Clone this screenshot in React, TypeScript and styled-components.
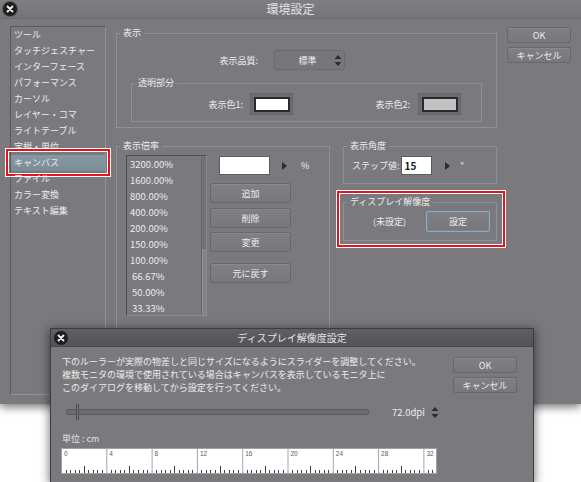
import React from 'react'
import styled, { createGlobalStyle } from 'styled-components'

const GlobalStyle = createGlobalStyle`
  html, body { margin: 0; padding: 0; background: #ffffff; }
`

const fontStack = `"Noto Sans CJK JP", "Noto Sans", "Liberation Sans", sans-serif`
const textColor = '#ececec'
const panelBg = '#7a7a7e'
const groupLine = '#909094'

const Page = styled.div`
  position: relative;
  width: 581px;
  height: 482px;
  overflow: hidden;
  font-family: ${fontStack};
  font-size: 9px;
  color: ${textColor};
`

const MainWindow = styled.div`
  width: 581px;
  height: 404px;
  background: ${panelBg};
  box-shadow: 0 3px 9px rgba(0, 0, 0, 0.55);
  display: flex;
  flex-direction: column;
`

const TitleBar = styled.div<{ $dark?: boolean }>`
  height: ${({ $dark }) => ($dark ? '18px' : '19px')};
  flex: none;
  box-sizing: border-box;
  display: grid;
  grid-template-columns: 20px 1fr 20px;
  align-items: center;
  background: ${({ $dark }) =>
    $dark ? 'linear-gradient(#606064, #535357)' : 'linear-gradient(#7f7f83, #757579)'};
  border-bottom: 1px solid ${({ $dark }) => ($dark ? '#48484c' : '#6a6a6e')};
`

const TitleText = styled.div<{ $size: number }>`
  text-align: center;
  font-size: ${({ $size }) => $size}px;
  color: #e2e2e2;
  line-height: 1;
`

const CloseCircle = styled.span`
  width: 14px;
  height: 14px;
  margin-left: 3px;
  border-radius: 50%;
  background: #1e1e1e;
  box-shadow: 0 0 0 1px #58585c;
  display: flex;
  align-items: center;
  justify-content: center;
`

const CloseButton = () => (
  <CloseCircle>
    <svg width="8" height="8" viewBox="0 0 8 8">
      <path d="M1.5 1.5 L6.5 6.5 M6.5 1.5 L1.5 6.5" stroke="#f2f2f2" strokeWidth="1.8" strokeLinecap="round" />
    </svg>
  </CloseCircle>
)

const Body = styled.div`
  flex: 1;
  display: flex;
  padding: 7px 0 0 10px;
`

const Sidebar = styled.div`
  width: 96px;
  height: 369px;
  flex: none;
  box-sizing: border-box;
  border: 1px solid;
  border-color: #5a5a5e #929296 #929296 #5a5a5e;
`

const SideItem = styled.div<{ $selected?: boolean }>`
  position: relative;
  height: 16px;
  line-height: 16px;
  padding-left: 3px;
  white-space: nowrap;
  background: ${({ $selected }) => ($selected ? 'linear-gradient(#869aa4, #7b8c96)' : 'transparent')};

  ${({ $selected }) =>
    $selected &&
    `&::after {
      content: '';
      position: absolute;
      top: -6px;
      bottom: -5px;
      left: -5px;
      right: -5px;
      border: 2px solid #e3141c;
      box-shadow: inset 0 0 0 1px #ffffff, 0 0 0 1px #ffffff;
    }`}
`

const Content = styled.div`
  display: flex;
  gap: 10px;
  margin-left: 10px;
`

const LeftCol = styled.div`
  width: 381px;
  margin-top: 1px;
  display: flex;
  flex-direction: column;
`

const RightCol = styled.div`
  width: 64px;
  margin-top: 1px;
  display: flex;
  flex-direction: column;
  gap: 4px;
`

const Group = styled.fieldset<{ $h: number; $w?: number }>`
  margin: 0;
  padding: 0;
  min-width: 0;
  box-sizing: border-box;
  height: ${({ $h }) => $h}px;
  ${({ $w }) => ($w ? `width: ${$w}px;` : '')}
  border: 1px solid ${groupLine};
`

const Legend = styled.legend`
  padding: 0 3px;
  margin-left: 3px;
  line-height: 12px;
  font-size: 9px;
`

const QualityRow = styled.div`
  display: flex;
  align-items: center;
  margin-top: 11px;
`

const RowLabel = styled.span<{ $w?: number }>`
  ${({ $w }) => ($w ? `width: ${$w}px; text-align: right;` : '')}
  white-space: nowrap;
`

const SelectBox = styled.div`
  margin-left: 16px;
  width: 71px;
  height: 20px;
  box-sizing: border-box;
  background: #77777b;
  border: 1px solid #6a6a6e;
  border-radius: 2px;
  display: flex;
  align-items: center;
`

const SelectText = styled.span`
  flex: 1;
  text-align: center;
  padding-left: 6px;
`

const SpinIcon = () => (
  <svg width="8" height="13" viewBox="0 0 8 13">
    <path d="M4 1 L7.5 5 L0.5 5 Z M0.5 8 L7.5 8 L4 12 Z" fill="#2c2c2e" />
  </svg>
)

const SpinWrap = styled.span<{ $ml?: number }>`
  display: flex;
  margin-right: 2px;
  margin-left: ${({ $ml }) => $ml ?? 0}px;
`

const SubGroup = styled(Group)`
  margin: 7px 14px 0 14px;
`

const SwatchRow = styled.div`
  display: flex;
  margin-top: 4px;
`

const SwatchCell = styled.div<{ $w: number; $gap: number }>`
  width: ${({ $w }) => $w}px;
  display: flex;
  justify-content: flex-end;
  align-items: center;
  gap: ${({ $gap }) => $gap}px;
`

const SwatchFrame = styled.div`
  width: 43px;
  height: 22px;
  box-sizing: border-box;
  background: #6d6d71;
  border: 1px solid #666669;
  display: flex;
  align-items: center;
  justify-content: center;
`

const Swatch = styled.div<{ $color: string }>`
  width: 36px;
  height: 15px;
  box-sizing: border-box;
  border: 2px solid #2a2a2c;
  background: ${({ $color }) => $color};
`

const LowerRow = styled.div`
  display: flex;
  gap: 13px;
  margin-top: 12px;
`

const ZoomInner = styled.div`
  display: flex;
  padding: 3px 0 0 9px;
`

const ListBox = styled.div`
  width: 81px;
  height: 161px;
  box-sizing: border-box;
  border: 1px solid;
  border-color: #4e4e52 #8c8c90 #8c8c90 #4e4e52;
  display: flex;
  overflow: hidden;
`

const ListItems = styled.div`
  flex: 1;
`

const ListItem = styled.div<{ $indent?: boolean }>`
  height: 16px;
  line-height: 16px;
  padding-left: ${({ $indent }) => ($indent ? 5 : 3)}px;
  font-size: 9.5px;
  white-space: nowrap;
`

const ScrollTrack = styled.div`
  width: 5px;
  box-sizing: border-box;
  background: #727276;
  border-left: 1px solid #67676b;
  display: flex;
  flex-direction: column;
`

const ScrollThumb = styled.div`
  margin-top: 93px;
  flex: 1;
  background: #838387;
  border-left: 1px solid #909094;
`

const ZoomControls = styled.div`
  margin-left: 3px;
  display: flex;
  flex-direction: column;
`

const InputRow = styled.div<{ $ml?: number }>`
  display: flex;
  align-items: center;
  height: 19px;
  margin-top: 1px;
  margin-left: ${({ $ml }) => $ml ?? 0}px;
`

const TextInput = styled.div<{ $w: number; $ml?: number }>`
  width: ${({ $w }) => $w}px;
  height: 19px;
  margin-left: ${({ $ml }) => $ml ?? 0}px;
  box-sizing: border-box;
  background: #ffffff;
  border: 1px solid #5c5c60;
  color: #1a1a1a;
  font-size: 10px;
  font-weight: 700;
  line-height: 17px;
  padding-left: 3px;
`

const ArrowWrap = styled.span<{ $ml: number }>`
  display: flex;
  margin-left: ${({ $ml }) => $ml}px;
`

const Unit = styled.span<{ $ml: number }>`
  margin-left: ${({ $ml }) => $ml}px;
`

const RightArrow = () => (
  <svg width="5" height="8" viewBox="0 0 5 8">
    <path d="M0 0 L5 4 L0 8 Z" fill="#2c2c2e" />
  </svg>
)

const Button = styled.div<{ $w?: number; $h?: number; $mt?: number; $focus?: boolean }>`
  width: ${({ $w }) => $w ?? 64}px;
  height: ${({ $h }) => $h ?? 16}px;
  margin-top: ${({ $mt }) => $mt ?? 0}px;
  flex: none;
  box-sizing: border-box;
  display: flex;
  align-items: center;
  justify-content: center;
  background: linear-gradient(#808084, #78787c);
  border: 1px solid ${({ $focus }) => ($focus ? '#8fadbe' : '#68686c')};
  box-shadow: ${({ $focus }) =>
    $focus ? 'inset 0 0 0 1px #74858f' : 'inset 0 1px 0 rgba(255, 255, 255, 0.08)'};
  border-radius: 2px;
  white-space: nowrap;
`

const RightStack = styled.div`
  width: 154px;
  display: flex;
  flex-direction: column;
`

const AngleRow = styled.div`
  display: flex;
  align-items: center;
  margin-top: 4px;
  padding-left: 8px;
`

const Highlighted = styled.div`
  position: relative;
  margin-top: 12px;

  &::after {
    content: '';
    position: absolute;
    top: -5px;
    bottom: -6px;
    left: -6px;
    right: -8px;
    border: 2px solid #e3141c;
    box-shadow: inset 0 0 0 1px #ffffff, 0 0 0 1px #ffffff;
    pointer-events: none;
  }
`

const ResolutionRow = styled.div`
  display: flex;
  align-items: center;
  margin-top: 3px;
  padding-left: 29px;
  gap: 20px;
`

/* overlay dialog */

const Dialog = styled.div`
  position: absolute;
  left: 50px;
  top: 328px;
  width: 484px;
  height: 156px;
  box-sizing: border-box;
  background: ${panelBg};
  border: 1px solid #3c3c40;
  box-shadow: 0 2px 10px rgba(0, 0, 0, 0.6);
  display: flex;
  flex-direction: column;
`

const DialogBody = styled.div`
  display: grid;
  grid-template-columns: 1fr 64px;
  padding: 8px 16px 0 11px;
`

const Message = styled.div`
  line-height: 13px;
  white-space: nowrap;
`

const DialogButtons = styled.div`
  display: flex;
  flex-direction: column;
  gap: 4px;
  margin-top: 2px;
`

const SliderRow = styled.div`
  grid-column: 1 / span 2;
  display: flex;
  align-items: center;
  height: 16px;
  margin-top: 10px;
  padding-left: 4px;
`

const SliderTrack = styled.div`
  position: relative;
  width: 303px;
  height: 6px;
  box-sizing: border-box;
  background: #6c6c70;
  border: 1px solid #5a5a5e;
  border-radius: 2px;
`

const SliderThumb = styled.div`
  position: absolute;
  left: 9px;
  top: -6px;
  width: 3px;
  height: 16px;
  box-sizing: border-box;
  background: #77777b;
  border: 1px solid #505054;
  border-radius: 1px;
`

const DpiValue = styled.span`
  margin-left: 23px;
  font-size: 9.5px;
`

const UnitLabel = styled.div`
  grid-column: 1 / span 2;
  margin-top: 13px;
  line-height: 11px;
  color: #e0e0e0;
`

const RulerBox = styled.div`
  grid-column: 1 / span 2;
  margin: 4px 0 0 -1px;
  width: 376px;
  height: 26px;
  display: flex;
`

const Ruler = () => {
  const seg = 45.3
  const w = 376
  const h = 26
  const ticks: React.ReactNode[] = []
  const labels: React.ReactNode[] = []
  for (let s = 0; s * seg < w; s++) {
    const x0 = s * seg
    ticks.push(<line key={`s${s}`} x1={x0 + 0.5} y1={0} x2={x0 + 0.5} y2={h} stroke="#a4a4a8" strokeWidth={1} />)
    labels.push(
      <text key={`l${s}`} x={x0 + 3} y={8} fontSize={6.5} fill="#5a5a5a" fontFamily="Liberation Sans, sans-serif">
        {s * 4}
      </text>
    )
    for (let t = 1; t < 10; t++) {
      const x = Math.round(x0 + (t * seg) / 10) + 0.5
      if (x >= w - 1) break
      const len = t === 5 ? 8 : 4
      ticks.push(<line key={`t${s}-${t}`} x1={x} y1={h - len} x2={x} y2={h} stroke="#3a3a3a" strokeWidth={1} />)
    }
  }
  return (
    <RulerBox>
      <svg width={w} height={h} viewBox={`0 0 ${w} ${h}`}>
        <rect x={0} y={0} width={w} height={h} fill="#ffffff" />
        {ticks}
        {labels}
        <rect x={0.5} y={0.5} width={w - 1} height={h - 1} fill="none" stroke="#a0a0a4" />
      </svg>
    </RulerBox>
  )
}

const sideItems = [
  'ツール',
  'タッチジェスチャー',
  'インターフェース',
  'パフォーマンス',
  'カーソル',
  'レイヤー・コマ',
  'ライトテーブル',
  '定規・単位',
  'キャンバス',
  'ファイル',
  'カラー変換',
  'テキスト編集',
]

const zoomLevels = [
  '3200.00%',
  '1600.00%',
  '800.00%',
  '400.00%',
  '200.00%',
  '150.00%',
  '100.00%',
  '66.67%',
  '50.00%',
  '33.33%',
]

export default function App() {
  return (
    <Page>
      <GlobalStyle />
      <MainWindow>
        <TitleBar>
          <CloseButton />
          <TitleText $size={12}>環境設定</TitleText>
        </TitleBar>
        <Body>
          <Sidebar>
            {sideItems.map((item) => (
              <SideItem key={item} $selected={item === 'キャンバス'}>
                {item}
              </SideItem>
            ))}
          </Sidebar>
          <Content>
            <LeftCol>
              <Group $h={101}>
                <Legend>表示</Legend>
                <QualityRow>
                  <RowLabel $w={141}>表示品質:</RowLabel>
                  <SelectBox>
                    <SelectText>標準</SelectText>
                    <SpinWrap>
                      <SpinIcon />
                    </SpinWrap>
                  </SelectBox>
                </QualityRow>
                <SubGroup $h={45}>
                  <Legend>透明部分</Legend>
                  <SwatchRow>
                    <SwatchCell $w={161} $gap={7}>
                      <RowLabel>表示色1:</RowLabel>
                      <SwatchFrame>
                        <Swatch $color="#ffffff" />
                      </SwatchFrame>
                    </SwatchCell>
                    <SwatchCell $w={168} $gap={8}>
                      <RowLabel>表示色2:</RowLabel>
                      <SwatchFrame>
                        <Swatch $color="#c2c2c2" />
                      </SwatchFrame>
                    </SwatchCell>
                  </SwatchRow>
                </SubGroup>
              </Group>

              <LowerRow>
                <Group $h={256} $w={214}>
                  <Legend>表示倍率</Legend>
                  <ZoomInner>
                    <ListBox>
                      <ListItems>
                        {zoomLevels.map((z) => (
                          <ListItem key={z} $indent={z.length < 7}>
                            {z}
                          </ListItem>
                        ))}
                      </ListItems>
                      <ScrollTrack>
                        <ScrollThumb />
                      </ScrollTrack>
                    </ListBox>
                    <ZoomControls>
                      <InputRow $ml={9}>
                        <TextInput $w={51} />
                        <ArrowWrap $ml={12}>
                          <RightArrow />
                        </ArrowWrap>
                        <Unit $ml={14}>%</Unit>
                      </InputRow>
                      <Button $w={81} $h={20} $mt={8}>追加</Button>
                      <Button $w={81} $h={20} $mt={5}>削除</Button>
                      <Button $w={81} $h={20} $mt={4}>変更</Button>
                      <Button $w={81} $h={20} $mt={11}>元に戻す</Button>
                    </ZoomControls>
                  </ZoomInner>
                </Group>

                <RightStack>
                  <Group $h={44}>
                    <Legend>表示角度</Legend>
                    <AngleRow>
                      <RowLabel>ステップ値:</RowLabel>
                      <TextInput $w={31} $ml={1}>15</TextInput>
                      <ArrowWrap $ml={13}>
                        <RightArrow />
                      </ArrowWrap>
                      <Unit $ml={11}>°</Unit>
                    </AngleRow>
                  </Group>
                  <Highlighted>
                    <Group $h={45}>
                      <Legend>ディスプレイ解像度</Legend>
                      <ResolutionRow>
                        <span>(未設定)</span>
                        <Button $w={64} $h={21} $focus>
                          設定
                        </Button>
                      </ResolutionRow>
                    </Group>
                  </Highlighted>
                </RightStack>
              </LowerRow>
            </LeftCol>

            <RightCol>
              <Button>OK</Button>
              <Button>キャンセル</Button>
            </RightCol>
          </Content>
        </Body>
      </MainWindow>

      <Dialog>
        <TitleBar $dark>
          <CloseButton />
          <TitleText $size={10}>ディスプレイ解像度設定</TitleText>
        </TitleBar>
        <DialogBody>
          <Message>
            下のルーラーが実際の物差しと同じサイズになるようにスライダーを調整してください。
            <br />
            複数モニタの環境で使用されている場合はキャンバスを表示しているモニタ上に
            <br />
            このダイアログを移動してから設定を行ってください。
          </Message>
          <DialogButtons>
            <Button>OK</Button>
            <Button>キャンセル</Button>
          </DialogButtons>
          <SliderRow>
            <SliderTrack>
              <SliderThumb />
            </SliderTrack>
            <DpiValue>72.0dpi</DpiValue>
            <SpinWrap $ml={6}>
              <SpinIcon />
            </SpinWrap>
          </SliderRow>
          <UnitLabel>単位 : cm</UnitLabel>
          <Ruler />
        </DialogBody>
      </Dialog>
    </Page>
  )
}
